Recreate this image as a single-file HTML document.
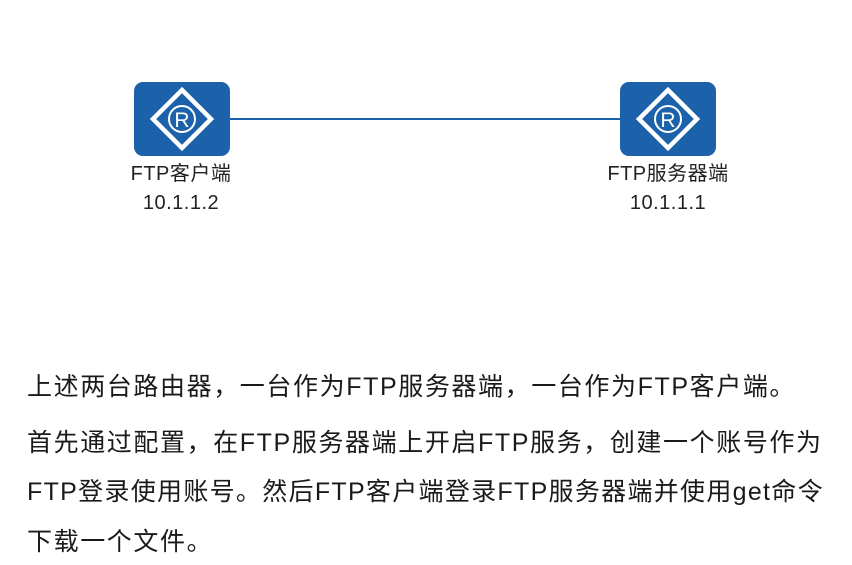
<!DOCTYPE html>
<html><head><meta charset="utf-8"><style>
body{margin:0;width:852px;height:565px;background:#fff;position:relative;overflow:hidden;font-family:"Liberation Sans","Noto Sans CJK SC",sans-serif;color:#1a1a1a}
.r{position:absolute;width:96px;height:74px;background:#1b62aa;border-radius:9px;top:82px}
.lbl{position:absolute;width:200px;text-align:center;font-size:20px;line-height:29px;top:160px;color:#222;letter-spacing:0.5px}
.p{position:absolute;left:27px;font-size:25px;letter-spacing:1.6px;white-space:nowrap}
</style></head><body>
<div style="position:absolute;left:228px;top:118px;width:394px;height:2px;background:#1b62aa"></div>
<div class="r" style="left:134px"><svg width="96" height="74"><polygon points="48,8 77,37 48,66 19,37" fill="none" stroke="#fff" stroke-width="4.5"/><circle cx="48" cy="37" r="13" fill="none" stroke="#fff" stroke-width="2"/><text x="48" y="45" font-size="21" fill="#fff" text-anchor="middle" font-family="Liberation Sans">R</text></svg></div>
<div class="r" style="left:620px"><svg width="96" height="74"><polygon points="48,8 77,37 48,66 19,37" fill="none" stroke="#fff" stroke-width="4.5"/><circle cx="48" cy="37" r="13" fill="none" stroke="#fff" stroke-width="2"/><text x="48" y="45" font-size="21" fill="#fff" text-anchor="middle" font-family="Liberation Sans">R</text></svg></div>
<div class="lbl" style="left:81px">FTP客户端<br>10.1.1.2</div>
<div class="lbl" style="left:568px">FTP服务器端<br>10.1.1.1</div>
<div class="p" style="top:367px">上述两台路由器，一台作为FTP服务器端，一台作为FTP客户端。</div>
<div class="p" style="top:423px">首先通过配置，在FTP服务器端上开启FTP服务，创建一个账号作为</div>
<div class="p" style="top:472px;letter-spacing:1.3px">FTP登录使用账号。然后FTP客户端登录FTP服务器端并使用get命令</div>
<div class="p" style="top:522px">下载一个文件。</div>
</body></html>
